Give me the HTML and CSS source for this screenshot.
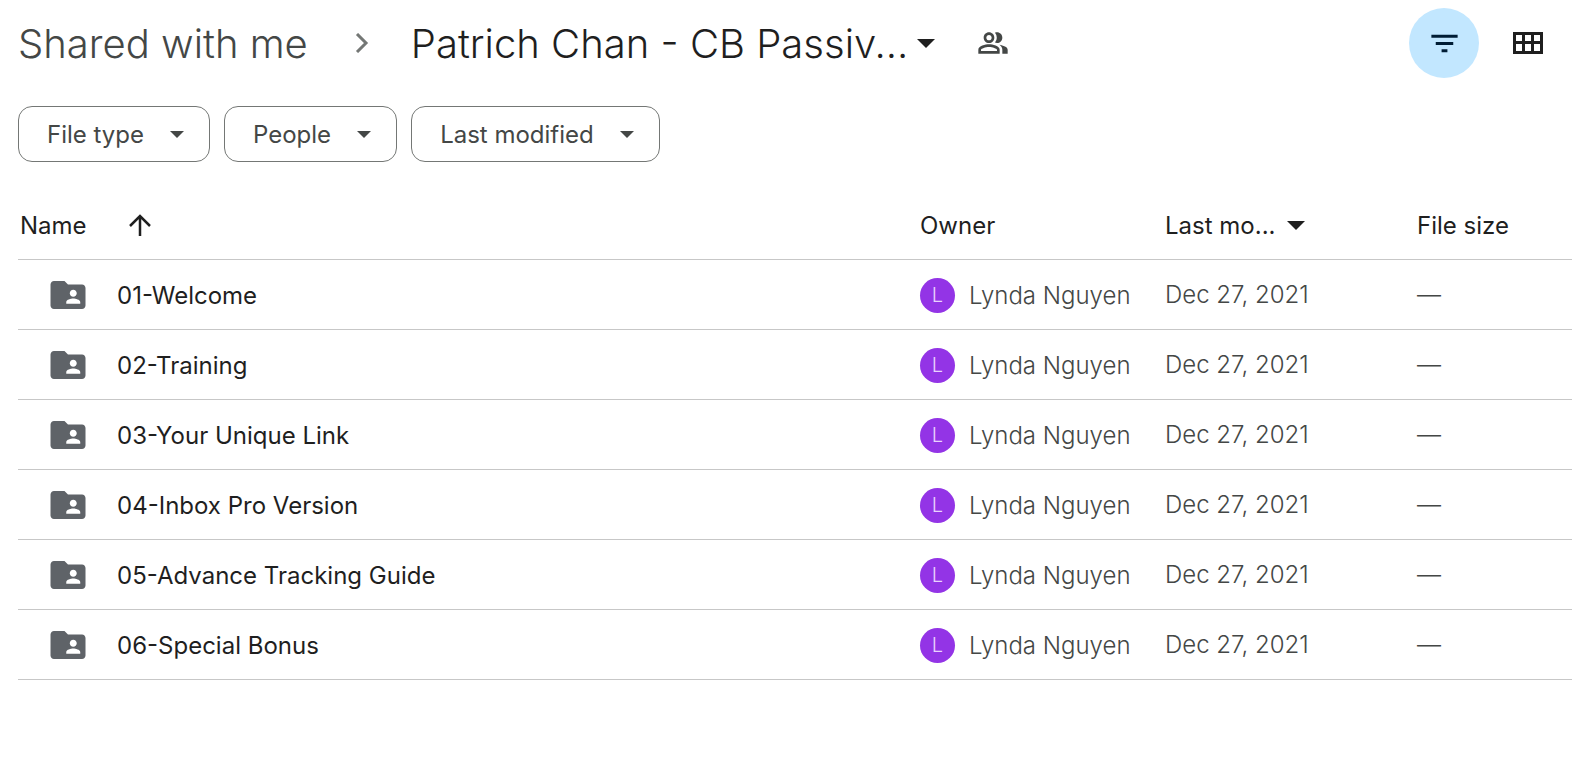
FILE: index.html
```
<!DOCTYPE html>
<html lang="en">
<head>
<meta charset="UTF-8" />
<meta name="viewport" content="width=device-width, initial-scale=1" />
<title>Shared with me</title>
<link rel="stylesheet" href="styles.css">
</head>
<body>

<!-- Icons used more than once -->
<svg class="sprite" aria-hidden="true">
  <symbol id="caret" viewBox="0 0 10 5"><path d="M0 0h10L5 5z"/></symbol>
  <symbol id="folder" viewBox="0 0 24 24"><path d="M20 6h-8l-2-2H4c-1.1 0-1.99.9-1.99 2L2 18c0 1.1.9 2 2 2h16c1.1 0 2-.9 2-2V8c0-1.1-.9-2-2-2zm-5 3c1.1 0 2 .9 2 2s-.9 2-2 2-2-.9-2-2 .9-2 2-2zm4 8h-8v-1c0-1.33 2.67-2 4-2s4 .67 4 2v1z"/></symbol>
</svg>

<header class="topbar">
  <nav class="breadcrumb" aria-label="Breadcrumb">
    <a class="crumb" href="#">Shared with me</a>
    <svg class="chevron" viewBox="0 0 14 20" aria-hidden="true"><path d="M2 1l9 9-9 9"/></svg>
    <button class="crumb current" type="button">
      <span>Patrich Chan - CB Passiv...</span>
      <svg class="caret-large"><use href="#caret"/></svg>
    </button>
    <button class="icon-btn people" type="button" aria-label="Manage access">
      <svg viewBox="0 0 24 24"><path d="M9 12c2.210 0 4-1.790 4-4s-1.790-4-4-4-4 1.790-4 4 1.790 4 4 4zm0-6c1.100 0 2 .9 2 2s-.9 2-2 2-2-.9-2-2 .9-2 2-2zm0 7c-2.670 0-8 1.340-8 4v3h16v-3c0-2.660-5.330-4-8-4zm6 5H3v-.99C3.200 16.290 6.300 15 9 15s5.800 1.290 6 2v1zM13.500 11.650A5.600 5.600 0 0 0 13.500 4.350C14 4.130 14.500 4 15 4c2.210 0 4 1.790 4 4s-1.790 4-4 4c-.5 0-1-.13-1.500-.35zM19 20v-3c0-1.450-.8-2.650-2.200-3.600C19.600 13.900 23 15.100 23 17v3z"/></svg>
    </button>
  </nav>
  <div class="actions">
    <button class="icon-btn filter" type="button" aria-label="Toggle filters">
      <svg viewBox="0 0 24 24"><path d="M10 18h4v-2h-4v2zM3 6v2h18V6H3zm3 7h12v-2H6v2z"/></svg>
    </button>
    <button class="icon-btn" type="button" aria-label="Grid layout">
      <svg class="grid-icon" viewBox="0 0 30 22"><path fill-rule="evenodd" d="M0 0h30v22H0zM3 3v6h6V3zM12 3v6h6V3zM21 3v6h6V3zM3 12v7h6v-7zM12 12v7h6v-7zM21 12v7h6v-7z"/></svg>
    </button>
  </div>
</header>

<div class="chips">
  <button class="chip" type="button">File type <svg class="caret-small"><use href="#caret"/></svg></button>
  <button class="chip" type="button">People <svg class="caret-small"><use href="#caret"/></svg></button>
  <button class="chip" type="button">Last modified <svg class="caret-small"><use href="#caret"/></svg></button>
</div>

<table class="files">
  <thead>
    <tr>
      <th>
        <div class="cell sort">Name
          <svg class="arrow" viewBox="0 0 22 22" aria-hidden="true"><path d="M11 22V2M1 12L11 2l10 10"/></svg>
        </div>
      </th>
      <th class="col-owner">Owner</th>
      <th class="col-date">
        <button class="sort-btn" type="button">Last mo... <svg class="caret-large"><use href="#caret"/></svg></button>
      </th>
      <th class="col-size">File size</th>
    </tr>
  </thead>
  <tbody>
    <tr>
      <td><a class="cell name" href="#"><svg class="folder"><use href="#folder"/></svg>01-Welcome</a></td>
      <td><div class="cell owner"><span class="avatar">L</span>Lynda Nguyen</div></td>
      <td>Dec 27, 2021</td>
      <td>—</td>
    </tr>
    <tr>
      <td><a class="cell name" href="#"><svg class="folder"><use href="#folder"/></svg>02-Training</a></td>
      <td><div class="cell owner"><span class="avatar">L</span>Lynda Nguyen</div></td>
      <td>Dec 27, 2021</td>
      <td>—</td>
    </tr>
    <tr>
      <td><a class="cell name" href="#"><svg class="folder"><use href="#folder"/></svg>03-Your Unique Link</a></td>
      <td><div class="cell owner"><span class="avatar">L</span>Lynda Nguyen</div></td>
      <td>Dec 27, 2021</td>
      <td>—</td>
    </tr>
    <tr>
      <td><a class="cell name" href="#"><svg class="folder"><use href="#folder"/></svg>04-Inbox Pro Version</a></td>
      <td><div class="cell owner"><span class="avatar">L</span>Lynda Nguyen</div></td>
      <td>Dec 27, 2021</td>
      <td>—</td>
    </tr>
    <tr>
      <td><a class="cell name" href="#"><svg class="folder"><use href="#folder"/></svg>05-Advance Tracking Guide</a></td>
      <td><div class="cell owner"><span class="avatar">L</span>Lynda Nguyen</div></td>
      <td>Dec 27, 2021</td>
      <td>—</td>
    </tr>
    <tr>
      <td><a class="cell name" href="#"><svg class="folder"><use href="#folder"/></svg>06-Special Bonus</a></td>
      <td><div class="cell owner"><span class="avatar">L</span>Lynda Nguyen</div></td>
      <td>Dec 27, 2021</td>
      <td>—</td>
    </tr>
  </tbody>
</table>

</body>
</html>
```
FILE: styles.css
```
* { box-sizing: border-box; }
body {
  margin: 0;
  padding: 8px 0 0 18px;
  font-family: Inter, "Liberation Sans", sans-serif;
  font-size: 24px;
  color: #1f1f1f;
  background: #fff;
}
button {
  padding: 0;
  border: 0;
  background: none;
  font: inherit;
  color: inherit;
  cursor: pointer;
}
a { color: inherit; text-decoration: none; }
svg { fill: currentColor; flex: none; }
.sprite { display: none; }

.caret-large { width: 18px; height: 9px; }
.caret-small { width: 14px; height: 7px; }

/* Top bar */
.topbar {
  display: flex;
  align-items: center;
  justify-content: space-between;
  height: 70px;
}
.breadcrumb { display: flex; align-items: center; }
.crumb {
  font-size: 40px;
  font-weight: 300;
  color: #444746;
  white-space: nowrap;
}
.chevron {
  width: 14px;
  height: 20px;
  margin: 0 42px 0 47px;
  fill: none;
  stroke: #747775;
  stroke-width: 3;
}
.current {
  display: flex;
  align-items: center;
  gap: 9px;
  color: #1f1f1f;
}
.people { margin-left: 42px; color: #444746; }
.people svg { width: 32px; height: 32px; }
.icon-btn { display: flex; align-items: center; justify-content: center; }
.actions {
  display: flex;
  align-items: center;
  gap: 34px;
  padding-right: 29px;
}
.filter {
  width: 70px;
  height: 70px;
  border-radius: 50%;
  background: #c2e7ff;
  color: #001d35;
}
.filter svg { width: 35px; height: 35px; }
.grid-icon { width: 30px; height: 22px; }

/* Filter chips */
.chips { display: flex; gap: 14px; margin-top: 28px; }
.chip {
  display: flex;
  align-items: center;
  gap: 26px;
  height: 56px;
  padding: 0 25px 0 28px;
  border: 1px solid #747775;
  border-radius: 14px;
  color: #444746;
}

/* File list */
.files {
  width: 100%;
  margin-top: 27px;
  border-collapse: collapse;
  table-layout: fixed;
}
th, td {
  height: 70px;
  padding: 0;
  border-bottom: 1px solid #c7c7c7;
  text-align: left;
  white-space: nowrap;
}
th {
  padding-top: 3px;
  font-weight: 400;
}
td { font-weight: 300; color: #444746; }
.col-owner { width: 245px; }
.col-date { width: 252px; }
.col-size { width: 155px; }
.cell {
  display: flex;
  align-items: center;
  padding-top: 2px;
}
.sort { gap: 42px; padding: 0 0 0 2px; }
.arrow {
  width: 22px;
  height: 22px;
  fill: none;
  stroke: currentColor;
  stroke-width: 2.5;
}
.sort-btn { display: flex; align-items: center; gap: 12px; }
.name {
  gap: 28px;
  padding-left: 29px;
  font-weight: 400;
  color: #1f1f1f;
}
.folder { width: 42px; height: 42px; color: #5f6368; }
.owner { gap: 14px; }
.avatar {
  width: 35px;
  height: 35px;
  border-radius: 50%;
  background: #9334e6;
  color: #e9d2fd;
  font-size: 20px;
  line-height: 35px;
  text-align: center;
}
```
